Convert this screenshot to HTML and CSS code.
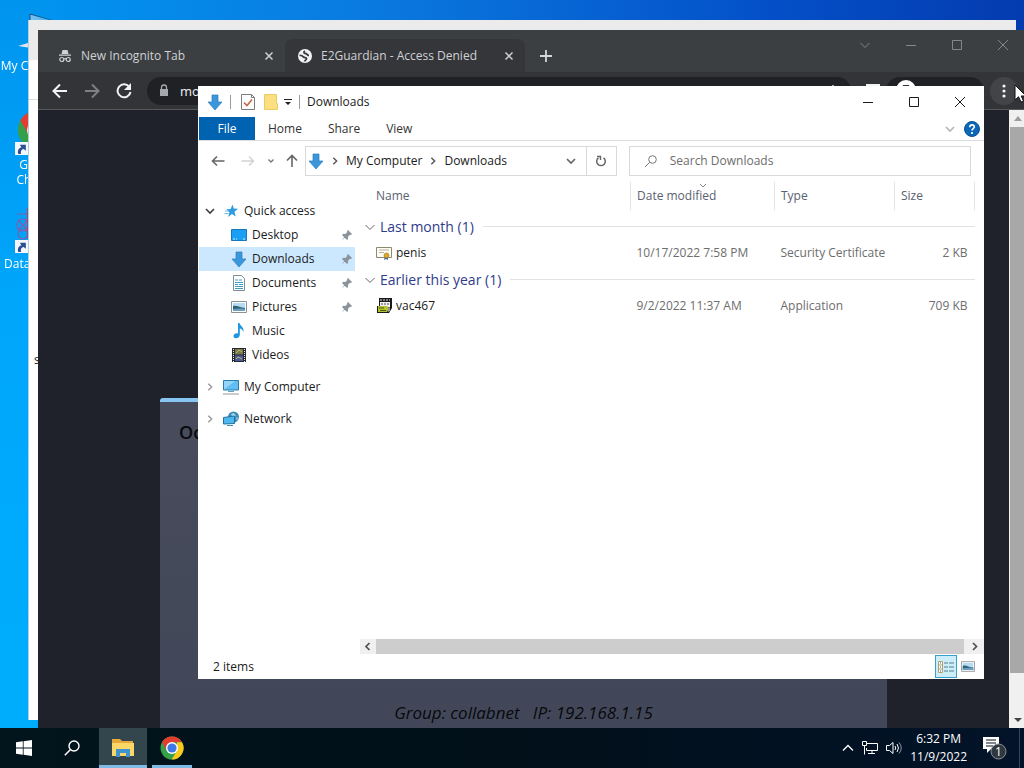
FILE: index.html
```html
<!DOCTYPE html>
<html lang="en">
<head>
<meta charset="utf-8">
<title>Desktop</title>
<link rel="stylesheet" href="styles.css">
</head>
<body>
<svg class="defs" aria-hidden="true">
  <defs>
    <symbol id="down-arrow" viewBox="0 0 16 16"><path d="M5 1h6v7h4l-7 8-7-8h4z" fill="#3a97dc" stroke="#2b7cba" stroke-width=".7"/></symbol>
    <symbol id="chev-down" viewBox="0 0 12 12"><path d="M1.500 4 6 8.500 10.500 4" fill="none" stroke="currentColor"/></symbol>
    <symbol id="chev-right" viewBox="0 0 12 12"><path d="M4 2l4 4-4 4" fill="none" stroke="currentColor" stroke-width="1.700"/></symbol>
    <symbol id="close" viewBox="0 0 12 12"><path d="M1 1l10 10M11 1 1 11" fill="none" stroke="currentColor"/></symbol>
    <symbol id="tab-close" viewBox="0 0 10 10"><path d="M1.500 1.500l7 7M8.500 1.500l-7 7" fill="none" stroke="currentColor" stroke-width="1.500"/></symbol>
    <symbol id="max" viewBox="0 0 12 12"><path d="M1.500 1.500h9v9h-9z" fill="none" stroke="currentColor"/></symbol>
    <symbol id="min" viewBox="0 0 12 12"><path d="M1 6.500h10" fill="none" stroke="currentColor"/></symbol>
    <symbol id="pin" viewBox="0 0 12 12"><path d="M7 1l4 4-1 1-1-.3-2 2 .2 2L6 11 3.800 8.700.5 11.500 3.200 8.200 1 6l1.300-1.200 2 .2 2-2L6 2z" fill="#8b949b"/></symbol>
    <symbol id="picture" viewBox="0 0 16 12"><path d="M.5.5h15v11H.5z" fill="#fff" stroke="#8c9196"/><path d="M2 2h12v8H2z" fill="#b5dcf2"/><path d="M2 5c4-1 7 2 12 2v3H2z" fill="#2f6378"/><path d="M2 8c4 0 7-1 12 0v2H2z" fill="#6d9fc0"/></symbol>
    <symbol id="shortcut" viewBox="0 0 12 12"><path d="M0 0h12v12H0z" fill="#f4f7fb"/><path d="M3 11C2 7 4 5 6 5L4.500 2.500H10V8L8 6.500C6 7 5 8 5.500 11z" fill="#2c4f92"/></symbol>
    <symbol id="chrome" viewBox="0 0 24 24"><circle cx="12" cy="12" r="11.500" fill="#34a04a"/><path d="M2 6.200A11.500 11.500 0 0 1 22 6.200H12L7 15z" fill="#e23d30"/><path d="M22 6.200A11.500 11.500 0 0 1 11.500 23.500L17 15V6.200z" fill="#fbc91b"/><circle cx="12" cy="12" r="6" fill="#fff"/><circle cx="12" cy="12" r="4.600" fill="#3e78e6"/></symbol>
  </defs>
</svg>

<main class="desktop">
  <div class="shortcuts">
    <div class="shortcut">
      <svg class="shortcut-art" viewBox="0 0 48 48"><path d="M17 4v20h28V12z" fill="#7cc3f2" stroke="#16507c"/><path d="M5 36l20-6v9z" fill="#dce6ee"/></svg>
      <span>My Computer</span>
    </div>
    <div class="shortcut">
      <svg class="shortcut-art" viewBox="0 0 48 48"><use href="#chrome" x="4" y="1" width="40" height="40"/><use href="#shortcut" x="2" y="33" width="13" height="13"/></svg>
      <span>Google<br>Chrome</span>
    </div>
    <div class="shortcut">
      <svg class="shortcut-art" viewBox="0 0 48 48"><g fill="none" stroke="#7c5fae" stroke-width="1.200"><path d="M4 6h12M5 12l10 10M15 12 5 22"/><circle cx="10" cy="17" r="6"/><circle cx="10" cy="26" r="5"/></g><path d="M15 0v30" stroke="#a8466f" stroke-width="2"/><use href="#shortcut" x="2" y="32" width="13" height="13"/></svg>
      <span class="label-start">Data</span>
    </div>
  </div>

  <section class="back-window"><div class="back-title"></div><div class="back-band"></div><div class="back-text">s</div></section>

  <section class="browser">
    <div class="tabstrip">
      <div class="tab">
        <svg width="14" height="14" viewBox="0 0 14 14"><path d="M4.500 1h5l1 4h-7zM1 5.500h12v1.300H1z" fill="#d0d3d6"/><g fill="none" stroke="#d0d3d6" stroke-width="1.200"><circle cx="3.800" cy="10.500" r="2"/><circle cx="10.200" cy="10.500" r="2"/><path d="M5.800 10q1.200-.8 2.400 0"/></g></svg>
        <span>New Incognito Tab</span>
        <button class="plain" aria-label="Close tab"><svg width="10" height="10"><use href="#tab-close"/></svg></button>
      </div>
      <div class="tab tab-active">
        <svg width="14" height="14" viewBox="0 0 14 14"><circle cx="7" cy="7" r="7" fill="#f1f3f4"/><path d="M1.500 6.500c2-.5 3 .5 4 1.500s3 0 3 1.500S7 11 6.500 12.500M7 2c-2 1-1 2.500.5 2.500S9 6.500 11 6.500" fill="none" stroke="#3b3d41" stroke-width="1.800"/></svg>
        <span>E2Guardian - Access Denied</span>
        <button class="plain" aria-label="Close tab"><svg width="10" height="10"><use href="#tab-close"/></svg></button>
      </div>
      <button class="plain new-tab" aria-label="New tab"><svg width="14" height="14" viewBox="0 0 14 14"><path d="M7 1v12M1 7h12" stroke="#d5d7da" stroke-width="1.800"/></svg></button>
      <div class="window-controls dim">
        <button class="plain" aria-label="Search tabs"><svg width="12" height="12"><use href="#chev-down"/></svg></button>
        <button class="plain" aria-label="Minimize"><svg width="12" height="12"><use href="#min"/></svg></button>
        <button class="plain" aria-label="Maximize"><svg width="12" height="12"><use href="#max"/></svg></button>
        <button class="plain" aria-label="Close"><svg width="12" height="12"><use href="#close"/></svg></button>
      </div>
    </div>
    <div class="toolbar">
      <button class="plain tool" aria-label="Back"><svg width="16" height="16" viewBox="0 0 16 16"><path d="M15 8H2M8 1.500 1.500 8 8 14.500" fill="none" stroke="#f1f3f4" stroke-width="2"/></svg></button>
      <button class="plain tool" aria-label="Forward"><svg width="16" height="16" viewBox="0 0 16 16"><path d="M1 8h13M8 1.500 14.500 8 8 14.500" fill="none" stroke="#7d7f83" stroke-width="2"/></svg></button>
      <button class="plain tool" aria-label="Reload"><svg width="16" height="16" viewBox="0 0 16 16"><path d="M13.500 4.200A6.500 6.500 0 1 0 14.500 9" fill="none" stroke="#f1f3f4" stroke-width="2"/><path d="M15 0v7H8z" fill="#f1f3f4"/></svg></button>
      <div class="omnibox">
        <svg width="10" height="13" viewBox="0 0 10 13"><path d="M1 5h8v7H1z" fill="#a5a8ac"/><path d="M2.500 5V3.500a2.500 2.500 0 0 1 5 0V5" fill="none" stroke="#a5a8ac" stroke-width="1.300"/></svg>
        <span>mo</span>
        <svg class="omni-star" width="14" height="14" viewBox="0 0 14 14"><path d="M7 1l2 4 4 .5-3 3 1 4-4-2-4 2 1-4-3-3L5 5z" fill="none" stroke="#c8cacd"/></svg>
      </div>
      <div class="panel-icon"></div>
      <div class="profile"><svg width="20" height="20" viewBox="0 0 20 20"><circle cx="10" cy="10" r="10" fill="#fff"/><path d="M7 5h6l1 4H6zM3 10h14v1H3z" fill="#303236"/></svg></div>
      <button class="plain menu-button" aria-label="Menu"><svg width="4" height="14" viewBox="0 0 4 14" fill="#f1f3f4"><circle cx="2" cy="2" r="1.600"/><circle cx="2" cy="7" r="1.600"/><circle cx="2" cy="12" r="1.600"/></svg></button>
    </div>
    <div class="page">
      <div class="page-body">
        <article class="notice">
          <h1>Oc</h1>
          <p>Group: collabnet &nbsp; IP: 192.168.1.15</p>
        </article>
      </div>
      <div class="vscroll">
        <svg width="10" height="17" viewBox="0 0 10 17"><path d="M1 11l4-5 4 5z" fill="#9c9c9c"/></svg>
        <div class="vthumb"></div>
        <svg class="vdown" width="10" height="17" viewBox="0 0 10 17"><path d="M1 7l4 4 4-4z" fill="#444"/></svg>
      </div>
    </div>
  </section>

  <section class="explorer">
    <header class="titlebar">
      <svg width="16" height="16"><use href="#down-arrow"/></svg>
      <i class="rule"></i>
      <svg class="quick" width="14" height="16" viewBox="0 0 14 16"><path d="M.5.5h10l3 3v12H.5z" fill="#fdfdfd" stroke="#7d7d7d"/><path d="M10.500.5v3h3" fill="none" stroke="#7d7d7d"/><path d="M3 8.500l3 3 5-6" fill="none" stroke="#c26a4a" stroke-width="1.600"/></svg>
      <svg class="quick" width="14" height="16" viewBox="0 0 14 16"><path d="M.5.5h12v9h1v6H.5z" fill="#fbdf81" stroke="#eccb62"/></svg>
      <svg class="quick-more" width="8" height="8" viewBox="0 0 8 8"><path d="M0 1h8v1H0zM1 4h6L4 7z" fill="#222"/></svg>
      <i class="rule"></i>
      <span class="title">Downloads</span>
      <div class="window-controls">
        <button class="plain" aria-label="Minimize"><svg width="12" height="12"><use href="#min"/></svg></button>
        <button class="plain" aria-label="Maximize"><svg width="12" height="12"><use href="#max"/></svg></button>
        <button class="plain" aria-label="Close"><svg width="12" height="12"><use href="#close"/></svg></button>
      </div>
    </header>
    <nav class="ribbon">
      <button class="plain file">File</button>
      <button class="plain">Home</button>
      <button class="plain">Share</button>
      <button class="plain">View</button>
      <span class="ribbon-end">
        <svg width="10" height="10" viewBox="0 0 10 10"><path d="M1 3l4 4 4-4" fill="none" stroke="#b5b5b5" stroke-width="1.600"/></svg>
        <svg width="16" height="16" viewBox="0 0 16 16"><circle cx="8" cy="8" r="7.500" fill="#0b67b8" stroke="#0a5497"/><path d="M5.700 6.200C5.700 3 10.500 3.200 10.300 6c-.1 1.600-2.300 1.700-2.300 3.600M8 11v2" fill="none" stroke="#fff" stroke-width="1.700"/></svg>
      </span>
    </nav>
    <div class="addressbar">
      <button class="plain go" aria-label="Back"><svg width="14" height="14" viewBox="0 0 14 14"><path d="M13.500 7h-12M6 2.500 1.500 7 6 11.500" fill="none" stroke="#666" stroke-width="1.600"/></svg></button>
      <button class="plain go" aria-label="Forward"><svg width="14" height="14" viewBox="0 0 14 14"><path d="M.5 7h12M8 2.500 12.500 7 8 11.500" fill="none" stroke="#d2d2d2" stroke-width="1.400"/></svg></button>
      <button class="plain recent" aria-label="Recent locations"><svg width="8" height="8" viewBox="0 0 8 8"><path d="M1.500 2.500 4 5l2.500-2.500" fill="none" stroke="#777" stroke-width="1.400"/></svg></button>
      <button class="plain up" aria-label="Up"><svg width="14" height="14" viewBox="0 0 14 14"><path d="M7 13V2M2 6.500 7 1.500l5 5" fill="none" stroke="#666" stroke-width="1.600"/></svg></button>
      <div class="crumbs">
        <svg width="16" height="16"><use href="#down-arrow"/></svg>
        <svg class="gray" width="10" height="10"><use href="#chev-right"/></svg>
        <span>My Computer</span>
        <svg class="gray" width="10" height="10"><use href="#chev-right"/></svg>
        <span>Downloads</span>
        <svg class="crumb-drop" width="10" height="10" viewBox="0 0 10 10"><path d="M1 3l4 4 4-4" fill="none" stroke="#666" stroke-width="1.700"/></svg>
      </div>
      <button class="plain refresh" aria-label="Refresh"><svg width="12" height="12" viewBox="0 0 12 12"><path d="M8.500 2.800A4.300 4.300 0 1 1 3.500 2.800" fill="none" stroke="#666" stroke-width="1.500"/><path d="M2 1.500h3.500V5" fill="none" stroke="#666" stroke-width="1.400"/></svg></button>
      <label class="search"><svg width="14" height="14" viewBox="0 0 14 14"><circle cx="8.500" cy="5.500" r="3.800" fill="none" stroke="#777"/><path d="M5.700 8.300 1 13" stroke="#777"/></svg><input type="text" placeholder="Search Downloads" aria-label="Search Downloads"></label>
    </div>

    <div class="content">
      <ul class="tree">
        <li class="root"><svg class="expander" width="10" height="10" viewBox="0 0 10 10"><path d="M1 3l4 4 4-4" fill="none" stroke="#404040" stroke-width="1.600"/></svg><svg width="16" height="16" viewBox="0 0 16 16"><path d="M9.500 1.500l1.300 4 4.200.3-3.500 3 1.200 4.700-3.700-2.500-3.800 3 1.200-4.700-3-3 4.200-.3z" fill="#2f9be0"/><path d="M2 8h4M1.500 10.500h4" stroke="#6cbcf0"/></svg>Quick access</li>
        <li><svg width="16" height="16" viewBox="0 0 16 16"><path d="M.5 2.500h15v11H.5z" fill="#19a0f5" stroke="#1876bd"/><path d="M2 12h2M5 12h1M12 12h2" stroke="#d9f0ff"/></svg>Desktop<svg class="pin" width="12" height="12"><use href="#pin"/></svg></li>
        <li class="selected"><svg width="16" height="16"><use href="#down-arrow"/></svg>Downloads<svg class="pin" width="12" height="12"><use href="#pin"/></svg></li>
        <li><svg width="16" height="16" viewBox="0 0 16 16"><path d="M2.500.5h8l3 3v12h-11z" fill="#fff" stroke="#7f8d95"/><path d="M4 5h3M4 7.500h8M4 9.500h3M8 9.500h4M4 11.500h8M4 13.500h8M8 5h3" stroke="#3b9fc2"/></svg>Documents<svg class="pin" width="12" height="12"><use href="#pin"/></svg></li>
        <li><svg width="16" height="12"><use href="#picture"/></svg>Pictures<svg class="pin" width="12" height="12"><use href="#pin"/></svg></li>
        <li><svg width="16" height="16" viewBox="0 0 16 16"><path d="M7 0h1.500c.5 3 5 4 3.800 9-.6-2.500-2-3.300-3.500-3.500v6.500c0 3.500-6.300 4.500-6.300 1.300 0-2.300 2.300-3.300 4.500-2.800z" fill="#1f97e0"/></svg>Music</li>
        <li><svg width="16" height="16" viewBox="0 0 16 16"><path d="M1 1h14v14H1z" fill="#27292e"/><path d="M4 2h8v5.500H4z" fill="#77794f"/><path d="M4 8.500h8V14H4z" fill="#4a5c9b"/><path d="M2.500 2v13M13.500 2v13" stroke="#e9e9e9" stroke-dasharray="1 1"/><path d="M5 6l3-3 3 2M5 12l2-2 4 2" stroke="#c5b95a" fill="none"/></svg>Videos</li>
        <li class="root spaced"><svg class="expander" width="10" height="10"><use href="#chev-right"/></svg><svg width="16" height="16" viewBox="0 0 16 16"><path d="M.5 1.500h15v9.500H.5z" fill="#61bdf2" stroke="#2b7da9"/><path d="M1 10.500 12 2H1z" fill="#94d6fa"/><path d="M5 12.500h6" stroke="#58a4c7"/><path d="M0 15h16" stroke="#93989b"/></svg>My Computer</li>
        <li class="root spaced"><svg class="expander" width="10" height="10"><use href="#chev-right"/></svg><svg width="16" height="16" viewBox="0 0 16 16"><circle cx="10.500" cy="6" r="5.500" fill="#3c88b7"/><path d="M8 3l3-1 2 3-3 2zM13 7l2-1-1 4z" fill="#a9d5e7"/><path d="M.5 6.500 11.500 5v7.500l-11 .5z" fill="#4db8f0" stroke="#216f9d"/><path d="M4 14.500h6" stroke="#3e8eaf"/></svg>Network</li>
      </ul>

      <div class="listing">
        <table>
          <colgroup><col><col class="c-date"><col class="c-type"><col class="c-size"></colgroup>
          <thead><tr><th>Name</th><th><svg class="sort" width="8" height="5" viewBox="0 0 8 5"><path d="M1 1l3 3 3-3" fill="none" stroke="#888"/></svg>Date modified</th><th>Type</th><th>Size</th></tr></thead>
          <tbody>
            <tr class="group"><td colspan="4"><div><svg width="12" height="12"><use href="#chev-down"/></svg>Last month (1)<i></i></div></td></tr>
            <tr class="file-row"><td><div><svg width="16" height="16" viewBox="0 0 16 16"><path d="M.5 2.500h15v10H.5z" fill="#fffdf2" stroke="#8e8873"/><path d="M3 5h10M3 7.500h5" stroke="#b5b0a0"/><path d="M9 11l-1 4 2-1 2 1v-4z" fill="#3c64a5"/><circle cx="10.500" cy="10.500" r="2.500" fill="#d9a72d" stroke="#9a761d" stroke-width=".6"/></svg>penis</div></td><td>10/17/2022 7:58 PM</td><td>Security Certificate</td><td>2 KB</td></tr>
            <tr class="group"><td colspan="4"><div><svg width="12" height="12"><use href="#chev-down"/></svg>Earlier this year (1)<i></i></div></td></tr>
            <tr class="file-row"><td><div><svg width="16" height="16" viewBox="0 0 16 16"><path d="M3 0h13v10l-3 5H1V8h2z" fill="#17191b"/><path d="M4 4h10v5H4z" fill="#f2f2f2"/><path d="M4 2h10" stroke="#dfe3ee" stroke-dasharray="2 1"/><path d="M5 6h8" stroke="#444" stroke-dasharray="2 1"/><path d="M2 8h9l2 2-2 4H2z" fill="#b6c434"/><path d="M3 10h5M4 12.500h6" stroke="#4b5a16"/><path d="M12 10l2-1v4l-2 1z" fill="#999"/></svg>vac467</div></td><td>9/2/2022 11:37 AM</td><td>Application</td><td>709 KB</td></tr>
          </tbody>
        </table>
        <div class="hscroll">
          <svg width="16" height="15" viewBox="0 0 16 15"><path d="M9.500 4 6 7.500 9.500 11" fill="none" stroke="#505050" stroke-width="1.700"/></svg>
          <div class="hthumb"></div>
          <svg width="20" height="15" viewBox="0 0 20 15"><path d="M9 4l3.500 3.500L9 11" fill="none" stroke="#505050" stroke-width="1.700"/></svg>
        </div>
      </div>
    </div>

    <footer class="status">
      <span>2 items</span>
      <button class="plain view view-on" aria-label="Details view"><svg width="16" height="14" viewBox="0 0 16 14"><path d="M.5 1.500h4v11h-4zM.5 5h4M.5 9h4" fill="#fff" stroke="#b3a26d"/><path d="M2 3h1M2 7h1M2 11h1" stroke="#275ea0"/><path d="M6 3h4M11 3h5M6 7h4M11 7h5M6 11h4M11 11h5" stroke="#597c8d"/></svg></button>
      <button class="plain view" aria-label="Icon view"><svg width="14" height="11"><use href="#picture"/></svg></button>
    </footer>
  </section>

  <svg class="cursor" width="14" height="20" viewBox="0 0 14 20"><path d="M1 1v15l3.500-3.300L7 18l2.500-1-2.300-5H12z" fill="#fff" stroke="#111"/></svg>
</main>

<footer class="taskbar">
  <button class="plain task" aria-label="Start"><svg width="16" height="16" viewBox="0 0 16 16" fill="#fff"><path d="M0 2.300l6.800-1v6.300H0zM7.600 1.200 16 0v7.600H7.600zM0 8.400h6.800v6.300L0 13.700zM7.600 8.400H16V16l-8.400-1.200z"/></svg></button>
  <button class="plain task" aria-label="Search"><svg width="16" height="16" viewBox="0 0 16 16"><circle cx="10" cy="6" r="5" fill="none" stroke="#fff" stroke-width="1.400"/><path d="M6.500 9.500.8 15.200" stroke="#fff" stroke-width="1.500"/></svg></button>
  <button class="plain task task-on" aria-label="File Explorer"><svg width="22" height="18" viewBox="0 0 22 18"><path d="M0 0h8l2 2h11v15H0z" fill="#e6a93a"/><path d="M0 4h22v13H0z" fill="#fbd768"/><path d="M4 10h14v8h-4v-4H8v4H4z" fill="#3f93cf"/></svg></button>
  <button class="plain task task-open" aria-label="Chrome"><svg width="24" height="24"><use href="#chrome"/></svg></button>
  <div class="tray">
    <svg width="12" height="12" viewBox="0 0 12 12"><path d="M1 8.500 6 3.500l5 5" fill="none" stroke="#fff" stroke-width="1.300"/></svg>
    <svg width="16" height="14" viewBox="0 0 16 14"><path d="M5 2.500h10.500v7H4.500V7M10 9.500v3M6 12.500h7M.5.5h4v4h-4zM2.500 4.500v9" fill="none" stroke="#fff"/></svg>
    <svg width="16" height="14" viewBox="0 0 16 14"><path d="M.5 4.500h3l3.500-3v11l-3.500-3h-3z" fill="none" stroke="#fff"/><path d="M9 5q1.500 2 0 4M11 3q3 4 0 8" fill="none" stroke="#fff"/><path d="M13 1.500q4.500 5.500 0 11" fill="none" stroke="#8a98a3"/></svg>
    <time class="clock">6:32 PM<br>11/9/2022</time>
    <svg width="24" height="24" viewBox="0 0 24 24"><path d="M0 1h16v12H8l-4 4v-4H0z" fill="#fff"/><path d="M3 4h10M3 7h10M3 10h7" stroke="#06131f" stroke-width="1.200"/><circle cx="15.500" cy="15.500" r="7.500" fill="#30383f" stroke="#8b9196"/><text x="15.500" y="20" text-anchor="middle" class="badge">1</text></svg>
  </div>
</footer>
</body>
</html>
```
FILE: styles.css
```css
* { box-sizing: border-box; }

body {
  margin: 0;
  height: 100vh;
  display: flex;
  flex-direction: column;
  overflow: hidden;
  font: 12px/16px "Open Sans", "Noto Sans", sans-serif;
  color: #1b1b1b;
}

svg { flex: none; display: block; }
.defs { position: absolute; width: 0; height: 0; }

.plain {
  border: 0;
  padding: 0;
  margin: 0;
  background: none;
  font: inherit;
  color: inherit;
  display: flex;
  align-items: center;
  justify-content: center;
}

.desktop {
  flex: 1;
  position: relative;
  overflow: hidden;
  background: linear-gradient(to right, #0096f2 0%, #0a7be0 35%, #0450c8 75%, #043bb0 100%);
}

.shortcuts {
  width: 74px;
  height: 100%;
  padding-top: 10px;
  display: flex;
  flex-direction: column;
  gap: 2px;
  background: linear-gradient(#0094ee, #00a6fa 40%, #00adfd);
  mask-image: linear-gradient(to right, #000 30px, transparent);
  color: #fff;
  text-align: center;
}
.shortcut {
  height: 97px;
  display: flex;
  flex-direction: column;
  align-items: center;
}
.shortcut-art { width: 48px; height: 48px; }
.shortcut span { padding-left: 4px; line-height: 15px; white-space: nowrap; }
.shortcut .label-start { align-self: flex-start; }

/* Windows are placed freely over the desktop. */
.back-window {
  position: absolute;
  inset: 20px 8px 8px 28px;
  background: #fff;
  border-left: 1px solid #b5cede;
}
.back-title { height: 40px; background: #ebebec; }
.back-band { height: 40px; border-bottom: 1px solid #ddd; }
.back-text { padding: 252px 0 0 5px; }

.browser {
  position: absolute;
  inset: 30px -2px 0 38px;
  display: flex;
  flex-direction: column;
  background: #1f212b;
}
.tabstrip {
  height: 42px;
  padding-left: 7px;
  display: flex;
  background: #3b3f42;
  color: #cfd1d4;
}
.tab {
  width: 240px;
  margin-top: 9px;
  padding: 0 11px 0 13px;
  display: flex;
  align-items: center;
  gap: 9px;
  border-radius: 8px 8px 0 0;
}
.tab span { flex: 1; white-space: nowrap; }
.tab-active { background: #35363a; }
.new-tab { width: 42px; margin-top: 9px; }

.window-controls { margin-left: auto; display: flex; height: 30px; }
.window-controls button { width: 46px; }
.dim { color: #85888b; }

.toolbar {
  height: 38px;
  padding: 0 8px 0 6px;
  display: flex;
  align-items: center;
  background: #333438;
  border-bottom: 1px solid #55575b;
}
.tool { width: 32px; height: 32px; }
.omnibox {
  flex: 1;
  height: 28px;
  margin-left: 7px;
  padding: 0 11px 0 12px;
  display: flex;
  align-items: center;
  gap: 11px;
  border-radius: 14px;
  background: #202124;
  color: #f1f3f4;
  font-size: 13px;
}
.omni-star { margin-left: auto; }
.panel-icon { width: 14px; height: 14px; margin-left: 15px; background: #f1f3f4; }
.profile {
  width: 98px;
  height: 28px;
  margin-left: 6px;
  padding: 3px 10px;
  border-radius: 14px;
  background: #202124;
}
.menu-button {
  width: 28px;
  height: 28px;
  margin-left: 6px;
  border-radius: 14px;
  background: #424448;
}

.page { flex: 1; display: flex; min-height: 0; }
.page-body { flex: 1; padding: 288px 122px 0; display: flex; }
.notice {
  flex: 1;
  padding: 18px 19px 5px;
  display: flex;
  flex-direction: column;
  justify-content: space-between;
  border-top: 4px solid #87c6f2;
  border-radius: 3px 3px 0 0;
  background: linear-gradient(#484c5c, #414758);
  color: #08090c;
}
.notice h1 { margin: 0; font-size: 18px; line-height: 24px; font-weight: 600; }
.notice p { margin: 0; font-size: 17px; line-height: 20px; font-style: italic; text-align: center; }

.vscroll {
  width: 17px;
  display: flex;
  flex-direction: column;
  align-items: center;
  background: #f0f0f0;
}
.vthumb { flex: 1; width: 15px; background: #a8a8a8; }
.vdown { margin-top: 38px; }

.explorer {
  position: absolute;
  inset: 86px 40px 49px 198px;
  padding-left: 1px;
  display: flex;
  flex-direction: column;
  background: #fff;
}
.titlebar { height: 31px; padding: 0 1px 0 8px; display: flex; align-items: center; }
.rule { width: 1px; height: 14px; margin: 0 7px; background: #999; }
.quick { margin-left: 3px; margin-right: 6px; }
.title { flex: 1; }

.ribbon { height: 24px; display: flex; border-bottom: 1px solid #dcdde0; }
.ribbon button { padding: 0 13px; color: #333; }
.ribbon .file { width: 56px; background: #0063b1; color: #fff; }
.ribbon-end { margin-left: auto; padding-right: 4px; display: flex; align-items: center; gap: 9px; }
.gray { color: #555; }

.addressbar { height: 41px; padding: 0 13px 1px 4px; display: flex; align-items: center; }
.go { width: 30px; height: 30px; }
.recent { width: 16px; height: 30px; }
.up { width: 26px; height: 30px; }
.crumbs {
  flex: 311;
  height: 30px;
  padding: 0 10px 0 2px;
  display: flex;
  align-items: center;
  gap: 6px;
  border: 1px solid #d9d9d9;
  white-space: nowrap;
}
.crumb-drop { margin-left: auto; }
.refresh { width: 30px; height: 30px; border: solid #d9d9d9; border-width: 1px 1px 1px 0; }
.search {
  flex: 379;
  height: 30px;
  margin-left: 12px;
  padding-left: 14px;
  display: flex;
  align-items: center;
  gap: 12px;
  border: 1px solid #d9d9d9;
}
.search input {
  flex: 1;
  min-width: 0;
  padding: 0;
  border: 0;
  outline: 0;
  background: none;
  font: inherit;
}
.search input::placeholder { color: #6d6d6d; opacity: 1; }

.content { flex: 1; display: flex; min-height: 0; }
.tree { width: 156px; margin: 0 5px 0 0; padding: 17px 0 0; list-style: none; }
.tree li {
  height: 24px;
  padding: 0 2px 0 32px;
  display: flex;
  align-items: center;
  gap: 5px;
  white-space: nowrap;
}
.tree .root { padding-left: 6px; }
.tree .spaced { margin-top: 8px; }
.tree .selected { background: #cce8ff; }
.expander { margin-right: 3px; color: #999; }
.pin { margin-left: auto; }

.listing { flex: 1; display: flex; flex-direction: column; min-width: 0; }
table {
  margin: 0 9px 0 4px;
  border-collapse: collapse;
  table-layout: fixed;
  color: #6d6d6d;
}
.c-date { width: 144px; }
.c-type { width: 120px; }
.c-size { width: 80px; }
td, th { padding: 0 7px 0 6px; font-weight: 400; text-align: left; white-space: nowrap; }
th { height: 28px; position: relative; color: #5a6170; border-right: 1px solid #e5e5e5; }
th:first-child { padding-left: 12px; }
thead::after { content: ""; display: block; height: 3px; }
.sort { position: absolute; top: 1px; left: 50%; margin-left: -4px; }
td:last-child { text-align: right; }
.group td { height: 27px; padding: 0; text-align: left; font-size: 14px; color: #2f3c8a; }
.group div { display: flex; align-items: center; gap: 4px; }
.group svg { color: #666; }
.group i { flex: 1; height: 1px; margin-left: 5px; background: #e2e2e2; }
.file-row td { height: 26px; }
.file-row td:first-child { padding-left: 12px; color: #1b1b1b; }
.file-row div { display: flex; align-items: center; gap: 4px; }

.hscroll { height: 15px; margin-top: auto; display: flex; background: #f0f0f0; }
.hthumb { flex: 1; background: #cdcdcd; }

.status { height: 25px; padding: 0 5px 0 14px; display: flex; align-items: center; }
.status span { flex: 1; }
.view { width: 22px; height: 23px; }
.view-on { background: #cceef9; border: 1px solid #3a9fcc; }

.cursor { position: absolute; top: 84px; right: -4px; }

.taskbar {
  height: 40px;
  display: flex;
  background: linear-gradient(to right, #02141c, #011019 50%, #031329);
  color: #fff;
}
.task { width: 48px; border-bottom: 3px solid transparent; padding-top: 3px; }
.task-on { margin-left: 3px; background: #33464d; border-color: #7fb9e6; }
.task-open {
  width: 40px;
  margin-left: 5px;
  border-color: #7fb9e6;
}
.tray {
  margin-left: auto;
  margin-right: 4px;
  padding-right: 12px;
  display: flex;
  align-items: center;
  gap: 8px;
  border-right: 1px solid #34475a;
}
.clock { margin-right: 8px; line-height: 18px; text-align: center; }
.badge { font-size: 12px; fill: #fff; }
```
